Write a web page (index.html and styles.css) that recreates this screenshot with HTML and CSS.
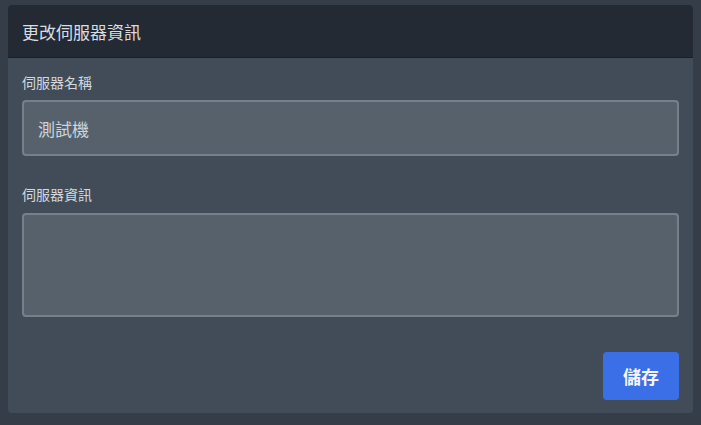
FILE: index.html
```html
<!DOCTYPE html>
<html lang="zh-Hant">
<head>
    <meta charset="UTF-8">
    <meta name="viewport" content="width=device-width, initial-scale=1.0">
    <title>更改伺服器資訊</title>
    <link rel="stylesheet" href="styles.css">
</head>
<body>
    <div class="card">
        <div class="card-head">更改伺服器資訊</div>
        <div class="card-body">
            <label class="field-label">伺服器名稱</label>
            <input class="field-input" type="text" value="測試機">

            <label class="field-label second">伺服器資訊</label>
            <textarea class="field-area"></textarea>

            <div class="actions">
                <button class="save-btn">儲存</button>
            </div>
        </div>
    </div>
</body>
</html>
```

FILE: styles.css
```css
html, body {
    height: 100%;
}
body {
    margin: 0;
    padding: 5px 8px;
    box-sizing: border-box;
    background: #353e48;
    font-family: "Noto Sans CJK TC", "Noto Sans", sans-serif;
}
.card {
    background: #424c58;
    border-radius: 4px;
    overflow: hidden;
}
.card-head {
    height: 53px;
    box-sizing: border-box;
    padding: 0 14px;
    display: flex;
    align-items: center;
    background: #232a34;
    border-bottom: 1px solid #1a2029;
    color: #d9dee3;
    font-size: 17px;
}
.card-body {
    padding: 14px 14px 13px;
    display: flex;
    flex-direction: column;
}
.field-label {
    font-size: 14px;
    line-height: 20px;
    color: #d3d9df;
    margin-bottom: 8px;
}
.field-label.second {
    margin-top: 28px;
    margin-bottom: 9px;
}
.field-input, .field-area {
    box-sizing: border-box;
    width: 100%;
    margin: 0;
    background: #56616c;
    border: 2px solid #75808b;
    border-radius: 4px;
    color: #cdd4db;
    font-family: inherit;
    font-size: 17px;
    outline: none;
}
.field-input {
    height: 56px;
    padding: 0 14px;
}
.field-area {
    height: 104px;
    resize: none;
    display: block;
}
.actions {
    display: flex;
    justify-content: flex-end;
    margin-top: 35px;
}
.save-btn {
    width: 76px;
    height: 48px;
    border: none;
    border-radius: 4px;
    background: #3b6fe8;
    color: #f2f5fb;
    font-family: inherit;
    font-size: 18px;
    font-weight: 700;
}
```
